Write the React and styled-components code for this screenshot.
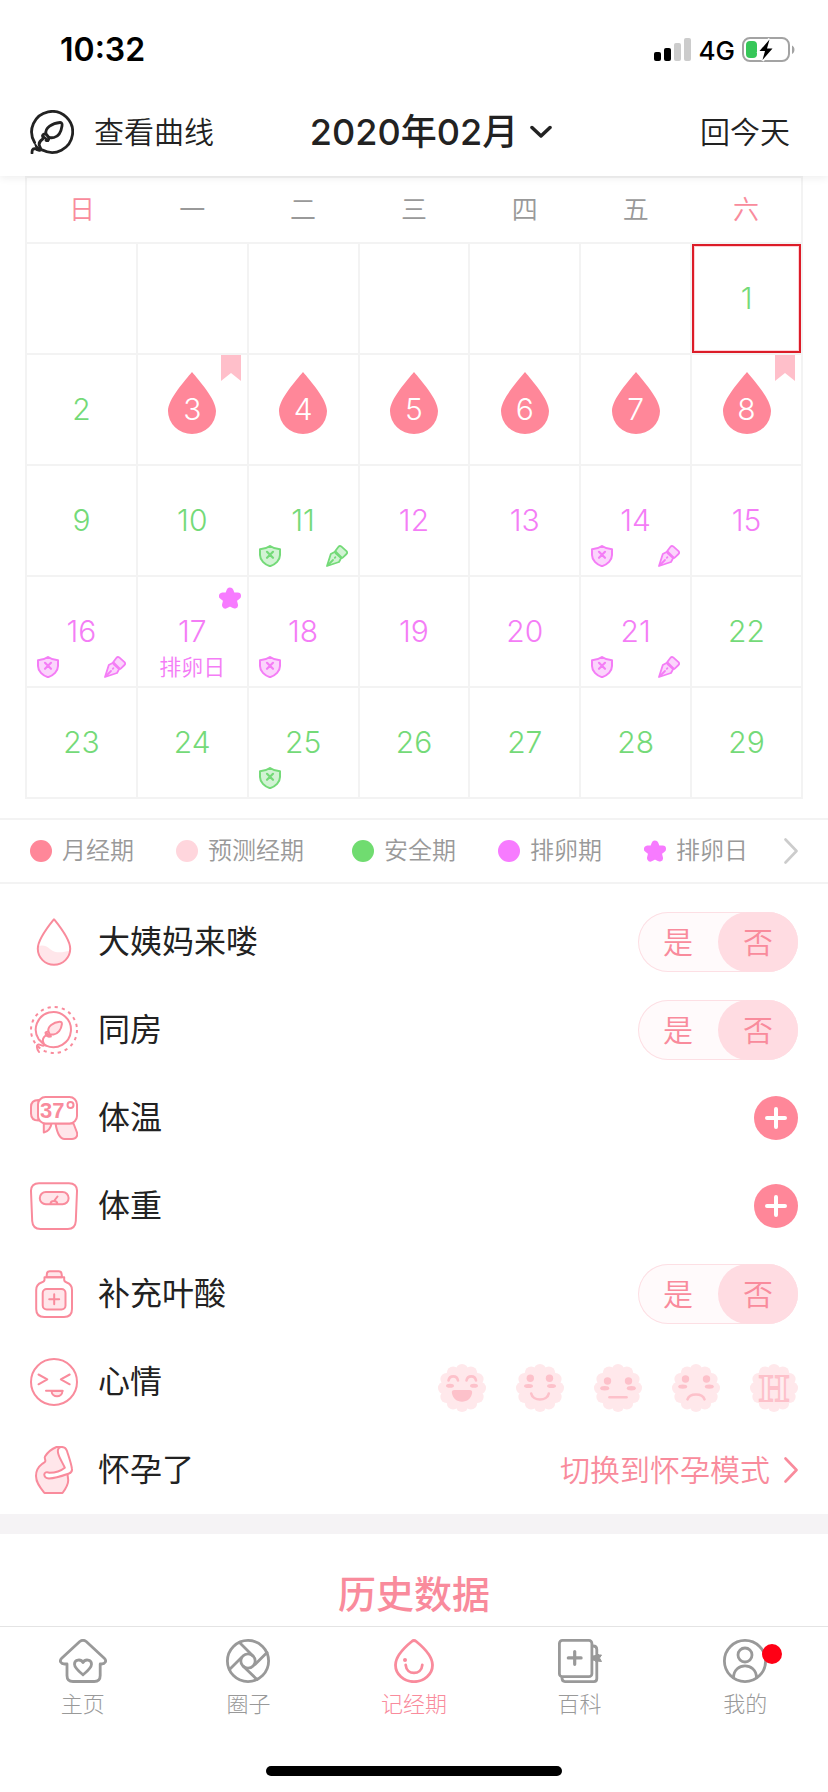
import { useState } from "react";
import styled, { createGlobalStyle, css } from "styled-components";

const PINK = "#ff8799";
const ROSE = "#f98b9c";
const GREEN = "#74da78";
const PURPLE = "#f47df6";

const WEEK = ["日", "一", "二", "三", "四", "五", "六"];

const RANGES = {
  period: [3, 8],
  fertile: [12, 21],
};

const MARKS = {
  3: { flag: true },
  8: { flag: true },
  11: { shield: true, pen: true },
  14: { shield: true, pen: true },
  16: { shield: true, pen: true },
  17: { star: true, note: "排卵日" },
  18: { shield: true },
  21: { shield: true, pen: true },
  25: { shield: true },
};

const LEGEND = [
  { label: "月经期", color: "#ff8799" },
  { label: "预测经期", color: "#ffd6dd" },
  { label: "安全期", color: "#70dc70" },
  { label: "排卵期", color: "#f77bff" },
  { label: "排卵日", star: true },
];

const inRange = (day, [from, to]) => day >= from && day <= to;

const dayType = (day) => {
  if (inRange(day, RANGES.period)) return "period";
  if (inRange(day, RANGES.fertile)) return "fertile";
  return "safe";
};

// February 2020 starts on a Saturday
const buildWeeks = () => {
  const cells = [...Array(6).fill(null), ...Array.from({ length: 29 }, (_, i) => i + 1)];
  const weeks = [];
  for (let i = 0; i < cells.length; i += 7) weeks.push(cells.slice(i, i + 7));
  return weeks;
};

/* ---------- status bar icons ---------- */

const SignalIcon = () => (
  <svg width="38" height="24" viewBox="0 0 38 24">
    <rect x="0" y="14" width="7" height="9" rx="2" />
    <rect x="10" y="10" width="7" height="13" rx="2" />
    <rect x="20" y="5" width="7" height="18" rx="2" fill="#ccc" />
    <rect x="30" y="0" width="7" height="23" rx="2" fill="#ccc" />
  </svg>
);

const BatteryIcon = () => (
  <svg width="54" height="26" viewBox="0 0 54 26">
    <rect x="1" y="1" width="46" height="23" rx="7" fill="none" stroke="#a3a3a3" strokeWidth="2" />
    <path d="M50 8.500c3.300 1.300 3.300 7 0 8.500z" fill="#a3a3a3" />
    <rect x="4" y="4" width="11" height="17" rx="4" fill="#37c759" />
    <path d="M27.500 2 17.500 14.500h5.500L20.500 23.500 30.500 11h-5.500z" stroke="#fff" strokeWidth="3" />
    <path d="M27.500 2.500 17.500 14h5.500L20.500 23 30.500 11.500h-5.500z" />
  </svg>
);

/* ---------- header icons ---------- */

const CurveIcon = () => (
  <svg width="44" height="44" viewBox="0 0 44 44" fill="none" stroke="#222" strokeWidth="2.800" strokeLinecap="round" strokeLinejoin="round">
    <path d="M4.600 32.500A20.500 20.500 0 1 1 12.500 40" />
    <path d="M16 24c-1.500-6 6.500-11 14-11.500 2-.1 2.300 1.500 2 3.500-.8 5.500-3.500 10.500-8 11.500-2.500.5-4 .4-5.500-.5z" />
    <path d="M12.500 26l5.500 4.500M15.800 23.800c-2.500 0-4 1.500-3 3.300M19 27.500c.3 2.300-1 3.600-3 3" />
    <path d="M12.800 29c-3.500 2.300-4.300 5.200-3 7.600 1 1.800 2 3.700 0 3.700-2.300 0-3-1.500-5.300-1.700C2.500 38.500 2 40.500 2 43" />
    <path d="M5 34c2 3 5 5.500 8.500 6.500L7 40.300z" fill="#222" strokeWidth="1.500" />
  </svg>
);

const ChevronDown = () => (
  <svg width="22" height="14" viewBox="0 0 22 14" fill="none" stroke="#222" strokeWidth="3.500" strokeLinecap="round" strokeLinejoin="round">
    <path d="M2 2.500l9 8.500 9-8.500" />
  </svg>
);

const ChevronRight = ({ color }) => (
  <svg width="14" height="26" viewBox="0 0 14 26" fill="none" stroke={color} strokeWidth="2.600" strokeLinecap="round" strokeLinejoin="round">
    <path d="M1.500 1.500L12.500 13 1.500 24.500" />
  </svg>
);

/* ---------- calendar marks ---------- */

const Drop = () => (
  <svg width="48" height="75" viewBox="0 0 48 75">
    <path d="M24 0C31 8.500 48 27 48 39a24 23 0 0 1-48 0C0 27 17 8.500 24 0z" fill={PINK} />
  </svg>
);

const Flag = () => (
  <svg width="20" height="26" viewBox="0 0 20 26">
    <path d="M0 0h20v26L10 18 0 26z" fill="#ffbfca" />
  </svg>
);

const Star = () => (
  <svg width="22" height="22" viewBox="0 0 22 22" fill="#f77bff" stroke="#f77bff" strokeWidth="7" strokeLinejoin="round">
    <path d="M11 4l1.800 4.700 5.700.3-4.400 3.400 1.400 5.600-4.500-2.400L6.500 18l1.400-5.600L3.500 9l5.700-.3z" />
  </svg>
);

const Shield = () => (
  <svg width="22" height="22" viewBox="0 0 22 22" fill="none" stroke="currentColor" strokeLinejoin="round" strokeLinecap="round">
    <path d="M11 1c2.500 1.800 6 3 10 3.300V10c0 5-4.500 9.500-10 11.200C5.500 19.500 1 15 1 10V4.300C5 4 8.500 2.800 11 1z" fill="currentColor" fillOpacity="0.320" strokeWidth="2" />
    <path d="M8 6.800l6 6M14 6.800l-6 6" strokeWidth="2.200" />
  </svg>
);

const Pen = () => (
  <svg width="22" height="22" viewBox="0 0 22 22" fill="currentColor" fillOpacity="0.320" stroke="currentColor" strokeWidth="1.800" strokeLinejoin="round" strokeLinecap="round">
    <path d="M1 21l3.800-12L9.500 6.500l6 5.800L13 17z" />
    <path d="M9.500 5.800l3-4c.8-1 2-1 3-.2l5 4.500c.8.9.8 2 0 2.900L17 12.300c-.8.8-2 .7-2.800 0L10 8.500c-.8-.8-1-1.800-.5-2.700z" />
    <path d="M2 20l5-5M8.800 12.800l.6-.6" fill="none" />
  </svg>
);

/* ---------- record row icons ---------- */

const RowSvg = ({ children }) => (
  <svg width="48" height="48" viewBox="0 0 48 48" fill="none" stroke={ROSE} strokeWidth="2" strokeLinecap="round" strokeLinejoin="round">
    {children}
  </svg>
);

const SOFT = "#ffe6ea";

const DropIcon = () => (
  <RowSvg>
    <path d="M8.300 28c5-1.500 9 .2 12 3.200 5.500 4.500 12.500 3.200 19.200 1.500C38.500 41 32 46.500 24 46.500S8 40 8 31z" fill={SOFT} stroke="none" />
    <path d="M24 1.300C19 7.500 7.800 21 7.800 30.800a16.200 16 0 0 0 32.400 0C40.200 21 29 7.500 24 1.300z" />
  </RowSvg>
);

const LoveIcon = () => (
  <RowSvg>
    <circle cx="24" cy="24" r="23" strokeDasharray="3.200 4.025" strokeLinecap="butt" />
    <path d="M8.800 33.500A17.600 17.600 0 1 1 16 39.600" />
    <path d="M18.500 25.500c-1.500-5 5-9.300 11-9.800 1.700-.1 2.600.7 2.400 2.500C31.300 23.500 28 28 23.500 28.500c-1.800.2-3.300.1-4-.7z" fill={SOFT} />
    <path d="M15.500 26.500l5.500 4M18 25.500c-2 .2-3 1.500-2 3.500 1 1.700 3.500 2.300 4.800.8" />
    <path d="M15.700 29.500c-2.500 2-3.500 4-2.500 6.500.8 2.200 2 3.600 0 3.700-1.800 0-3-1.500-4.700-1.200-2.300.4-2 4 .5 7.500M9.500 34c2.500 3 4 4 6.500 5.500" />
  </RowSvg>
);

const TempIcon = () => (
  <RowSvg>
    <path d="M8.500 6C3 6 1 9 1 13v6.500c0 4 2 7 7.500 7z" fill={SOFT} />
    <path d="M25.500 29.500c1 6 3 15.500 9 15.500H42c4.500 0 6-3.500 4.800-7l-3.300-8.500z" fill={SOFT} />
    <path d="M13.800 29.500v9c4.200-1 6.900-4.200 7.700-9z" fill={SOFT} />
    <rect x="8" y="3" width="39" height="26.500" rx="7.500" fill="#fff" />
    <text x="10" y="24" fontFamily="Liberation Sans, Arial, sans-serif" fontWeight="700" fontSize="22" fill={ROSE} stroke="none">37</text>
    <circle cx="40.500" cy="11" r="3" />
  </RowSvg>
);

const WeightIcon = () => (
  <RowSvg>
    <path d="M9 1.200h30c5 0 8.200 3 8 8L45.800 39c-.3 5-3 8-8 8H10.500c-5 0-8-3-8.300-8L1 9.200c-.2-5 3-8 8-8z" />
    <rect x="9.800" y="10" width="28.800" height="12.300" rx="6.100" fill={SOFT} />
    <path d="M20.500 22c0-4 6.800-4 6.800 0M24 19l3.500-4.500" />
  </RowSvg>
);

const FolicIcon = () => (
  <RowSvg>
    <path d="M16.500 7.200l.4-3.400C17 2 18 1.200 19.600 1.200h9.200c1.600 0 2.600.8 2.800 2.600l.4 3.400z" fill={SOFT} />
    <path d="M14.500 7.200h19.700v2.500c0 1.800 1 2.300 2.500 2.800 3.500 1.200 5.300 4 5.300 7.500v19c0 5-3 8-8 8H14.200c-5 0-8-3-8-8V20c0-3.500 1.800-6.300 5.300-7.500 1.500-.5 3-1 3-2.800z" />
    <rect x="12.700" y="19" width="22.800" height="20.500" rx="4" fill={SOFT} />
    <path d="M24.200 24.300v10M19.200 29.300h10" />
  </RowSvg>
);

const MoodIcon = () => (
  <RowSvg>
    <circle cx="24" cy="24" r="23" />
    <path d="M8.500 16.500l8.800 4.800-8.800 5M39.700 16.500l-8.900 4.800 8.900 5" />
    <path d="M21.500 33c.5 7 10.500 7 11 0z" fill={SOFT} />
    <path d="M16 32.700h16.500" />
  </RowSvg>
);

const PregnantIcon = () => (
  <RowSvg>
    <path d="M31 1h-4.500C21.500 3 17.500 6.500 15 10.500c-1 1.700.8 3 .3 4.800-.3 1.200-2 1.700-3.300 2.700C8 21 6 25 6 30c0 7 4.500 12 8.500 17h18c3-4 5.700-8 5.700-12.500 0-2.500-.7-4.500-.7-7z" fill={SOFT} />
    <path d="M31 1c-2.800.3-3.700 3-2.800 6.500 1.300 5 4.600 9.500 6.600 14.200-4 3.300-9.500 5-15.300 5-2.700-1-5.300-.4-5.200 2 .1 2.300 2.200 3.500 4.700 3.800 7-.2 13.500-2.700 20-5 2.200-.8 3.400-2.400 2.900-5C41 16.500 38.700 10.500 37 5 36 2.200 33.500.8 31 1z" fill="#fff" />
  </RowSvg>
);

/* ---------- mood faces ---------- */

const TINT = "#fdc1ca";

const BUMPS = Array.from({ length: 12 }, (_, i) => {
  const angle = (i * Math.PI) / 6;
  return [24 + 17.8 * Math.sin(angle), 24 - 17.8 * Math.cos(angle)];
});

const Face = ({ children }) => (
  <svg width="48" height="48" viewBox="0 0 48 48">
    <g fill="#ffe8eb">
      <circle cx="24" cy="24" r="20" />
      {BUMPS.map(([x, y], i) => (
        <circle key={i} cx={x} cy={y} r="6.200" />
      ))}
    </g>
    {children}
  </svg>
);

const Dots = ({ left, right, y, rx = 3.7, ry = 3.7 }) => (
  <g fill={TINT}>
    <ellipse cx={left} cy={y} rx={rx} ry={ry} />
    <ellipse cx={right} cy={y} rx={rx} ry={ry} />
  </g>
);

const Line = ({ d }) => <path d={d} fill="none" stroke={TINT} strokeWidth="2.600" strokeLinecap="round" />;

const MOODS = [
  {
    name: "开心",
    face: (
      <Face>
        <Line d="M10.500 16.500c1-5.500 8.500-5.500 9.500 0M28.500 16.500c1-5.500 8.500-5.500 9.500 0" />
        <Dots left={12} right={36} y={21.7} rx={4} ry={2} />
        <path d="M16.500 26h15c2 0 3 1 2.600 3-1 5.500-5 8.700-10.100 8.700S14.900 34.500 13.900 29c-.4-2 .6-3 2.600-3z" fill={TINT} />
      </Face>
    ),
  },
  {
    name: "不错",
    face: (
      <Face>
        <Dots left={14.3} right={33.5} y={14.3} />
        <Dots left={12.5} right={35.5} y={22} rx={4.5} ry={2} />
        <Line d="M15.200 29.500c1.500 8 16.100 8 17.600 0" />
      </Face>
    ),
  },
  {
    name: "一般",
    face: (
      <Face>
        <Dots left={13.5} right={34.5} y={17} />
        <Dots left={10.7} right={37.3} y={24.3} rx={4.5} ry={2.2} />
        <Line d="M15.500 33.300h17" />
      </Face>
    ),
  },
  {
    name: "难过",
    face: (
      <Face>
        <Dots left={13.5} right={34.5} y={15} />
        <Dots left={10.7} right={37.3} y={22.6} rx={4.5} ry={2.2} />
        <Line d="M15.500 35.300c2-6.500 15-6.500 17 0" />
      </Face>
    ),
  },
  {
    name: "H",
    face: (
      <Face>
        <text x="24" y="37" textAnchor="middle" fontFamily="Liberation Serif, serif" fontWeight="700" fontSize="38" fill="#ffeef0" stroke={TINT} strokeWidth="2">H</text>
      </Face>
    ),
  },
];

/* ---------- tab icons ---------- */

const TabSvg = ({ width = 44, children }) => (
  <svg width={width} height="44" viewBox={`0 0 ${width} 44`} fill="none" stroke="currentColor" strokeWidth="2.800" strokeLinecap="round" strokeLinejoin="round">
    {children}
  </svg>
);

const HomeIcon = () => (
  <TabSvg width={48}>
    <path d="M20.800 2.500c2-1.500 4.400-1.500 6.400 0L45.300 19.300c2.800 2.700.7 5.700-2.800 5.700h-1.300v11.500c0 4-2 6-6 6H14c-4 0-6-2-6-6V25H5.500C2 25-.1 22 2.700 19.300z" />
    <path d="M24 35.800c-4-3.300-8.500-7-8.500-10.600 0-5 6.500-5.400 8.500-1.700 2-3.700 8.500-3.300 8.500 1.700 0 3.600-4.500 7.300-8.500 10.600z" />
  </TabSvg>
);

const CircleIcon = () => (
  <TabSvg>
    <circle cx="22" cy="22" r="20.600" />
    <circle cx="22" cy="22" r="7.200" />
    <path d="M13.500 3.500l13 13M41 13.500L29 25.500M31 40.500L17.500 27.500M3.500 30.500L15.500 18.500" />
  </TabSvg>
);

const PeriodIcon = () => (
  <TabSvg>
    <path d="M19.700 2.500c1.500-1.300 3-1.300 4.600 0C31 8 40.500 17 40.500 26a18.500 16.700 0 0 1-37 0C3.500 17 13 8 19.700 2.500z" />
    <circle cx="13" cy="21" r="2" fill="currentColor" stroke="none" />
    <path d="M13.700 26c.8 10.500 15.800 10.500 16.600 0" />
  </TabSvg>
);

const WikiIcon = () => (
  <TabSvg>
    <rect x="1.400" y="1.400" width="32.500" height="36.300" rx="3" />
    <path d="M35 7c2.500 0 3.800 1.200 3.800 3.500v29c0 2-1 3.100-3 3.100H7c-2 0-3-1.200-3-3.500" />
    <path d="M16.700 12.500v12.800M10.300 18.900h12.800" strokeWidth="3.200" />
    <path d="M35 17l3-.5 1.500-2 1.500 1.500h2.500L41.500 19l2 3.500-3-.3-2 1.300-1.500-2-2-.5z" fill="currentColor" strokeWidth="1" />
  </TabSvg>
);

const MineIcon = () => (
  <TabSvg>
    <circle cx="22" cy="22" r="20.600" />
    <circle cx="22" cy="16" r="7" />
    <path d="M10.500 38.500c.5-15.500 22.500-15.500 23 0" />
  </TabSvg>
);

const TABS = [
  { label: "主页", Icon: HomeIcon },
  { label: "圈子", Icon: CircleIcon },
  { label: "记经期", Icon: PeriodIcon, active: true },
  { label: "百科", Icon: WikiIcon },
  { label: "我的", Icon: MineIcon, dot: true },
];

/* ---------- parts ---------- */

function Calendar() {
  const [selected, setSelected] = useState(1);
  return (
    <Month>
      <thead>
        <tr>
          {WEEK.map((name, i) => (
            <WeekDay key={name} $weekend={i === 0 || i === 6}>{name}</WeekDay>
          ))}
        </tr>
      </thead>
      <tbody>
        {buildWeeks().map((week, w) => (
          <tr key={w}>
            {week.map((day, i) => (
              <DayCell key={i}>
                {day && <Day day={day} selected={day === selected} onSelect={setSelected} />}
              </DayCell>
            ))}
          </tr>
        ))}
      </tbody>
    </Month>
  );
}

function Day({ day, selected, onSelect }) {
  const type = dayType(day);
  const mark = MARKS[day] || {};
  return (
    <DayButton type="button" $type={type} $selected={selected} onClick={() => onSelect(day)}>
      {type === "period" && <Drop />}
      <DayNumber>{day}</DayNumber>
      {mark.flag && <FlagMark><Flag /></FlagMark>}
      {mark.star && <StarMark><Star /></StarMark>}
      {mark.shield && <ShieldMark><Shield /></ShieldMark>}
      {mark.pen && <PenMark><Pen /></PenMark>}
      {mark.note && <DayNote>{mark.note}</DayNote>}
    </DayButton>
  );
}

function YesNo({ name, legend }) {
  const [value, setValue] = useState("否");
  return (
    <Toggle role="radiogroup" aria-label={legend}>
      {["是", "否"].map((option) => (
        <Option key={option} $on={value === option}>
          <input type="radio" name={name} value={option} checked={value === option} onChange={() => setValue(option)} />
          {option}
        </Option>
      ))}
    </Toggle>
  );
}

function AddButton({ label }) {
  return (
    <Add type="button" aria-label={label}>
      <svg width="44" height="44" viewBox="0 0 44 44" stroke="#fff" strokeWidth="4" strokeLinecap="round">
        <path d="M22 13v18M13 22h18" />
      </svg>
    </Add>
  );
}

function App() {
  return (
    <Screen>
      <GlobalStyle />
      <Header>
        <StatusBar>
          <Time>10:32</Time>
          <Network>
            <SignalIcon />
            <span>4G</span>
            <BatteryIcon />
          </Network>
        </StatusBar>
        <NavBar>
          <CurveLink href="#curve">
            <CurveIcon />
            查看曲线
          </CurveLink>
          <MonthButton type="button">
            2020年02月
            <ChevronDown />
          </MonthButton>
          <TodayLink href="#today">回今天</TodayLink>
        </NavBar>
      </Header>

      <Content>
        <Calendar />
        <Legend>
          {LEGEND.map((item) => (
            <LegendItem key={item.label}>
              {item.star ? <Star /> : <Dot $color={item.color} />}
              {item.label}
            </LegendItem>
          ))}
          <MoreButton type="button" aria-label="更多">
            <ChevronRight color="#ccc" />
          </MoreButton>
        </Legend>

        <Records>
          <Row>
            <DropIcon />
            <RowLabel>大姨妈来喽</RowLabel>
            <YesNo name="period" legend="大姨妈来喽" />
          </Row>
          <Row>
            <LoveIcon />
            <RowLabel>同房</RowLabel>
            <YesNo name="love" legend="同房" />
          </Row>
          <Row>
            <TempIcon />
            <RowLabel>体温</RowLabel>
            <AddButton label="体温" />
          </Row>
          <Row>
            <WeightIcon />
            <RowLabel>体重</RowLabel>
            <AddButton label="体重" />
          </Row>
          <Row>
            <FolicIcon />
            <RowLabel>补充叶酸</RowLabel>
            <YesNo name="folic" legend="补充叶酸" />
          </Row>
          <Row>
            <MoodIcon />
            <RowLabel>心情</RowLabel>
            <Moods>
              {MOODS.map((mood) => (
                <MoodButton key={mood.name} type="button" aria-label={mood.name}>{mood.face}</MoodButton>
              ))}
            </Moods>
          </Row>
          <Row>
            <PregnantIcon />
            <RowLabel>怀孕了</RowLabel>
            <SwitchLink href="#pregnant">
              切换到怀孕模式
              <ChevronRight color={ROSE} />
            </SwitchLink>
          </Row>
        </Records>

        <History>
          <h2>历史数据</h2>
        </History>
      </Content>

      <TabBar>
        <Tabs>
          {TABS.map(({ label, Icon, active, dot }) => (
            <Tab key={label} href={`#${label}`} $active={active}>
              <TabIcon>
                <Icon />
                {dot && <Badge />}
              </TabIcon>
              {label}
            </Tab>
          ))}
        </Tabs>
        <HomeIndicator />
      </TabBar>
    </Screen>
  );
}

export default App;

const GlobalStyle = createGlobalStyle`
  * {
    box-sizing: border-box;
  }
  body {
    margin: 0;
    background: #fff;
    color: #222;
    font-family: Inter, "Noto Sans CJK SC", sans-serif;
    line-height: 1.5;
  }
  button {
    padding: 0;
    border: none;
    background: none;
    color: inherit;
    font: inherit;
    cursor: pointer;
  }
  a {
    color: inherit;
    text-decoration: none;
  }
  svg {
    display: block;
    flex: none;
  }
`;

const Screen = styled.div`
  display: flex;
  flex-direction: column;
  min-height: 100vh;
`;

const Header = styled.header`
  position: sticky;
  top: 0;
  z-index: 2;
  background: #fff;
  box-shadow: 0 2px 8px rgba(0, 0, 0, 0.07);
`;

const StatusBar = styled.div`
  display: flex;
  justify-content: space-between;
  align-items: center;
  height: 88px;
  padding: 12px 32px 0 60px;
`;

const Time = styled.span`
  color: #000;
  font-size: 32px;
  font-weight: 600;
`;

const Network = styled.div`
  display: flex;
  align-items: center;
  gap: 7px;
  color: #000;
  font-size: 26px;
  font-weight: 500;
`;

const NavBar = styled.nav`
  display: grid;
  grid-template-columns: 1fr auto 1fr;
  align-items: center;
  height: 88px;
  padding: 0 30px;
  font-size: 30px;
  font-weight: 350;
`;

const CurveLink = styled.a`
  display: flex;
  align-items: center;
  gap: 20px;
`;

const MonthButton = styled.button`
  display: flex;
  align-items: center;
  gap: 12px;
  padding-left: 34px;
  font-size: 36px;
  font-weight: 500;
`;

const TodayLink = styled.a`
  justify-self: end;
  padding-right: 8px;
`;

const Content = styled.main`
  flex: 1;
`;

const Month = styled.table`
  width: calc(100% - 50px);
  margin: 0 25px;
  border-collapse: collapse;
  table-layout: fixed;
`;

const WeekDay = styled.th`
  height: 66px;
  padding: 0;
  border: 2px solid #f3f3f3;
  border-width: 2px 0;
  color: ${({ $weekend }) => ($weekend ? ROSE : "#999")};
  font-size: 26px;
  font-weight: 350;
  line-height: 32px;
  &:first-child {
    border-left-width: 2px;
  }
  &:last-child {
    border-right-width: 2px;
  }
`;

const DayCell = styled.td`
  height: 111px;
  padding: 0;
  border: 2px solid #f3f3f3;
`;

const dayColors = { period: "#fff", fertile: PURPLE, safe: GREEN };

const DayButton = styled.button`
  position: relative;
  display: grid;
  place-items: center;
  width: 100%;
  height: 109px;
  color: ${({ $type }) => dayColors[$type]};
  ${({ $selected }) =>
    $selected &&
    css`
      box-shadow: inset 0 0 0 2px #dc1c28, inset 0 0 0 3px #ffd0d6;
    `}
  > svg {
    grid-area: 1 / 1;
  }
`;

const DayNumber = styled.span`
  grid-area: 1 / 1;
  z-index: 1;
  font-size: 30px;
  font-weight: 300;
`;

const FlagMark = styled.span`
  position: absolute;
  top: 0;
  right: 6px;
`;

const StarMark = styled.span`
  position: absolute;
  top: 10px;
  right: 6px;
`;

const ShieldMark = styled.span`
  position: absolute;
  bottom: 8px;
  left: 10px;
`;

const PenMark = styled.span`
  position: absolute;
  bottom: 8px;
  right: 10px;
`;

const DayNote = styled.span`
  position: absolute;
  bottom: 8px;
  left: 0;
  width: 100%;
  text-align: center;
  font-size: 22px;
  font-weight: 350;
  line-height: 22px;
`;

const Legend = styled.div`
  display: grid;
  grid-template-columns: 146fr 176fr 146fr 146fr 140fr 14px;
  align-items: center;
  height: 66px;
  margin-top: 19px;
  padding: 0 30px;
  border-top: 2px solid #f3f3f3;
  border-bottom: 2px solid #f3f3f3;
  color: #999;
  font-size: 24px;
  font-weight: 350;
`;

const LegendItem = styled.span`
  display: flex;
  align-items: center;
  gap: 10px;
  white-space: nowrap;
`;

const Dot = styled.i`
  width: 22px;
  height: 22px;
  border-radius: 50%;
  background: ${({ $color }) => $color};
`;

const MoreButton = styled.button`
  display: flex;
`;

const Records = styled.section`
  padding-top: 14px;
`;

const Row = styled.div`
  display: flex;
  align-items: center;
  gap: 20px;
  height: 88px;
  padding: 0 30px;
`;

const RowLabel = styled.span`
  flex: 1;
  font-size: 32px;
  font-weight: 400;
`;

const Toggle = styled.div`
  display: flex;
  width: 160px;
  height: 60px;
  border-radius: 30px;
  background: #fffafb;
  box-shadow: inset 0 0 0 1px #fddfe4;
`;

const Option = styled.label`
  position: relative;
  flex: 1;
  display: flex;
  justify-content: center;
  align-items: center;
  border-radius: 30px;
  background: ${({ $on }) => ($on ? "#ffdce2" : "transparent")};
  color: ${ROSE};
  font-size: 30px;
  font-weight: 350;
  cursor: pointer;
  input {
    position: absolute;
    inset: 0;
    margin: 0;
    opacity: 0;
  }
`;

const Add = styled.button`
  width: 44px;
  height: 44px;
  border-radius: 50%;
  background: ${PINK};
`;

const Moods = styled.div`
  display: flex;
  gap: 30px;
  padding-top: 12px;
`;

const MoodButton = styled.button`
  width: 48px;
  height: 48px;
`;

const SwitchLink = styled.a`
  display: flex;
  align-items: center;
  gap: 14px;
  color: ${ROSE};
  font-size: 30px;
  font-weight: 350;
`;

const History = styled.section`
  padding-top: 38px;
  border-top: 20px solid #f5f3f5;
  h2 {
    margin: 0;
    color: ${ROSE};
    font-size: 38px;
    font-weight: 500;
    line-height: 44px;
    text-align: center;
  }
`;

const TabBar = styled.footer`
  position: sticky;
  bottom: 0;
  z-index: 2;
  height: 166px;
  border-top: 1px solid #e4e4e4;
  background: #fff;
`;

const Tabs = styled.nav`
  display: flex;
  height: 139px;
`;

const Tab = styled.a`
  flex: 1;
  display: flex;
  flex-direction: column;
  align-items: center;
  gap: 8px;
  padding-top: 12px;
  color: ${({ $active }) => ($active ? ROSE : "#999")};
  font-size: 22px;
  font-weight: 300;
  line-height: 26px;
`;

const TabIcon = styled.span`
  position: relative;
`;

const Badge = styled.i`
  position: absolute;
  top: 5px;
  right: -15px;
  width: 20px;
  height: 20px;
  border-radius: 50%;
  background: #ff0015;
`;

const HomeIndicator = styled.div`
  width: 296px;
  height: 10px;
  margin: 0 auto;
  border-radius: 5px;
  background: #000;
`;
